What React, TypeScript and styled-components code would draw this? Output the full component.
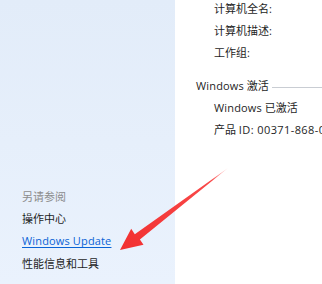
import React from "react";
import styled, { createGlobalStyle } from "styled-components";

const Global = createGlobalStyle`
  html, body { margin: 0; padding: 0; background: #fff; }
  body { font-family: "Open Sans", "Noto Sans CJK SC", sans-serif; font-size: 11px; color: #1e1e1e; }
`;

const Window = styled.div`
  position: relative;
  width: 322px;
  height: 284px;
  display: flex;
  overflow: hidden;
`;

const Sidebar = styled.aside`
  width: 175px;
  flex: none;
  background: linear-gradient(180deg, #e2ecf9 0%, #e6effb 50%, #eaf2fd 100%);
  display: flex;
  flex-direction: column;
  justify-content: flex-end;
  padding: 0 0 9px 22px;
  box-sizing: border-box;
`;

const SideItem = styled.div<{ $tone?: "muted" | "link" }>`
  line-height: 22.3px;
  white-space: nowrap;
  color: ${(p) => (p.$tone === "muted" ? "#8c8c8c" : p.$tone === "link" ? "#0a63d6" : "#1e1e1e")};
  text-decoration: ${(p) => (p.$tone === "link" ? "underline" : "none")};
  text-underline-offset: 2px;
`;

const Latin = styled.span<{ $spacing?: number }>`
  letter-spacing: ${(p) => p.$spacing ?? 0.15}px;
`;

const Content = styled.main`
  flex: 1;
  background: #fff;
  padding-left: 21px;
  display: flex;
  flex-direction: column;
  min-width: 0;
`;

const Group = styled.div<{ $top?: number }>`
  display: flex;
  flex-direction: column;
  margin-top: ${(p) => p.$top ?? 0}px;
`;

const Row = styled.div`
  line-height: 22px;
  padding-left: 18px;
  white-space: nowrap;
`;

const Heading = styled.div`
  display: flex;
  align-items: center;
  line-height: 22px;
  white-space: nowrap;
`;

const HeadingText = styled.span`
  flex: none;
`;

const Rule = styled.span`
  flex: 1;
  height: 1px;
  background: #c9cdd3;
  margin-left: 3px;
  margin-top: 2px;
`;

const ArrowSvg = styled.svg`
  position: absolute;
  left: 0;
  top: 0;
  pointer-events: none;
`;

export default function App() {
  return (
    <>
      <Global />
      <Window>
        <Sidebar>
          <SideItem $tone="muted">另请参阅</SideItem>
          <SideItem>操作中心</SideItem>
          <SideItem $tone="link">
            <Latin>Windows Update</Latin>
          </SideItem>
          <SideItem>性能信息和工具</SideItem>
        </Sidebar>
        <Content>
          <Group $top={-2}>
            <Row>计算机全名:</Row>
            <Row>计算机描述:</Row>
            <Row>工作组:</Row>
          </Group>
          <Group $top={11}>
            <Heading>
              <HeadingText>
                <Latin>Windows</Latin> 激活
              </HeadingText>
              <Rule />
            </Heading>
            <Row>
              <Latin>Windows</Latin> 已激活
            </Row>
            <Row>
              产品 <Latin $spacing={0.4}>ID: 00371-868-0000007-85554</Latin>
            </Row>
          </Group>
        </Content>
        <ArrowSvg width="322" height="284" viewBox="0 0 322 284">
          <defs>
            <linearGradient id="fade" x1="228" y1="168" x2="120" y2="250" gradientUnits="userSpaceOnUse">
              <stop offset="0" stopColor="#ff4a4a" stopOpacity="0.2" />
              <stop offset="0.15" stopColor="#f83535" stopOpacity="0.9" />
              <stop offset="1" stopColor="#f23030" />
            </linearGradient>
          </defs>
          <polygon
            points="228,168 134.8,234.3 131.2,228.7 120,250 143.5,244.7 139.9,239.5"
            fill="url(#fade)"
          />
        </ArrowSvg>
      </Window>
    </>
  );
}
